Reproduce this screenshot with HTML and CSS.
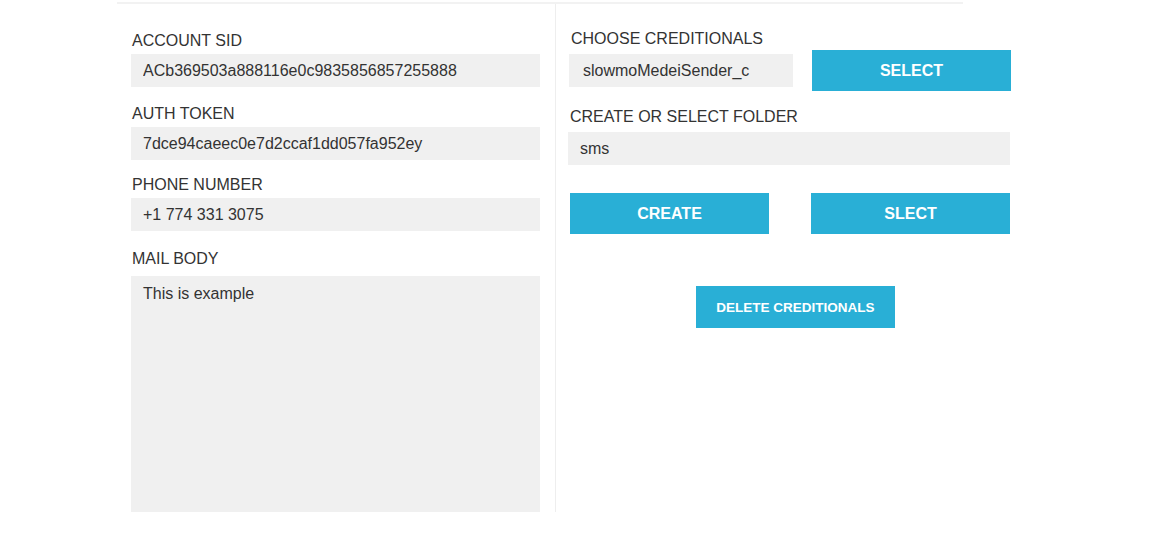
FILE: index.html
```html
<!DOCTYPE html>
<html lang="en">
<head>
    <meta charset="UTF-8">
    <meta name="viewport" content="width=device-width, initial-scale=1.0">
    <title>SMS Sender Settings</title>
    <link rel="stylesheet" href="styles.css">
</head>
<body>

    <div class="panel">
        <div class="column left">
            <div class="field sid">
                <label for="sid">ACCOUNT SID</label>
                <input type="text" id="sid" value="ACb369503a888116e0c9835856857255888">
            </div>

            <div class="field auth">
                <label for="token">AUTH TOKEN</label>
                <input type="text" id="token" value="7dce94caeec0e7d2ccaf1dd057fa952ey">
            </div>

            <div class="field phone">
                <label for="phone">PHONE NUMBER</label>
                <input type="text" id="phone" value="+1 774 331 3075">
            </div>

            <div class="field mail">
                <label for="body">MAIL BODY</label>
                <textarea id="body">This is example</textarea>
            </div>
        </div>

        <div class="column right">
            <label for="cred" class="cred-label">CHOOSE CREDITIONALS</label>
            <div class="row first">
                <input type="text" id="cred" class="short" value="slowmoMedeiSender_c">
                <button type="button" class="btn">SELECT</button>
            </div>

            <label for="folder" class="folder-label">CREATE OR SELECT FOLDER</label>
            <input type="text" id="folder" class="wide" value="sms">

            <div class="row buttons">
                <button type="button" class="btn">CREATE</button>
                <button type="button" class="btn">SLECT</button>
            </div>

            <button type="button" class="btn delete">DELETE CREDITIONALS</button>
        </div>
    </div>

</body>
</html>
```

FILE: styles.css
```css
body {
    margin: 0;
    font-family: "Liberation Sans", Arial, sans-serif;
    background-color: white;
    color: #333;
}
.panel {
    margin-left: 117px;
    margin-top: 2px;
    width: 846px;
    border-top: 2px solid #f2f2f2;
    display: flex;
}
.column {
    display: flex;
    flex-direction: column;
}
.left {
    width: 423px;
    padding: 27px 0 0 15px;
    border-right: 1px solid #eeeeee;
    height: 481px;
}
.left input, .left textarea {
    margin-left: -1px;
}
.right {
    padding: 25px 0 0 15px;
    width: 460px;
    margin-right: -460px;
}
label {
    display: block;
    font-size: 16px;
    line-height: 20px;
    margin-bottom: 3px;
}
.field.sid {
    margin-bottom: 17px;
}
.field.auth {
    margin-bottom: 15px;
}
.field.phone {
    margin-bottom: 18px;
}
.field.mail label {
    margin-bottom: 7px;
}
input, textarea {
    display: block;
    box-sizing: border-box;
    width: 409px;
    height: 33px;
    border: none;
    background-color: #f0f0f0;
    font-family: "Liberation Sans", Arial, sans-serif;
    font-size: 16px;
    color: #333;
    padding: 0 12px;
    margin: 0;
    outline: none;
}
textarea {
    height: 236px;
    padding: 9px 12px;
    resize: none;
}
.cred-label {
    margin-bottom: 1px;
}
.row {
    display: flex;
    align-items: center;
}
.short {
    width: 224px;
    padding-left: 14px;
    margin-left: -2px;
    margin-right: 19px;
}
.folder-label {
    margin-top: 16px;
    margin-bottom: 5px;
    margin-left: -1px;
}
.wide {
    width: 442px;
    margin-left: -3px;
}
.btn {
    width: 199px;
    height: 41px;
    border: none;
    background-color: #29afd6;
    color: white;
    font-family: "Liberation Sans", Arial, sans-serif;
    font-weight: bold;
    font-size: 16px;
    cursor: pointer;
    padding: 0;
}
.buttons {
    margin-top: 28px;
    margin-left: -1px;
    gap: 42px;
}
.delete {
    margin-top: 52px;
    margin-left: 125px;
    height: 42px;
    font-size: 13.5px;
}
```
